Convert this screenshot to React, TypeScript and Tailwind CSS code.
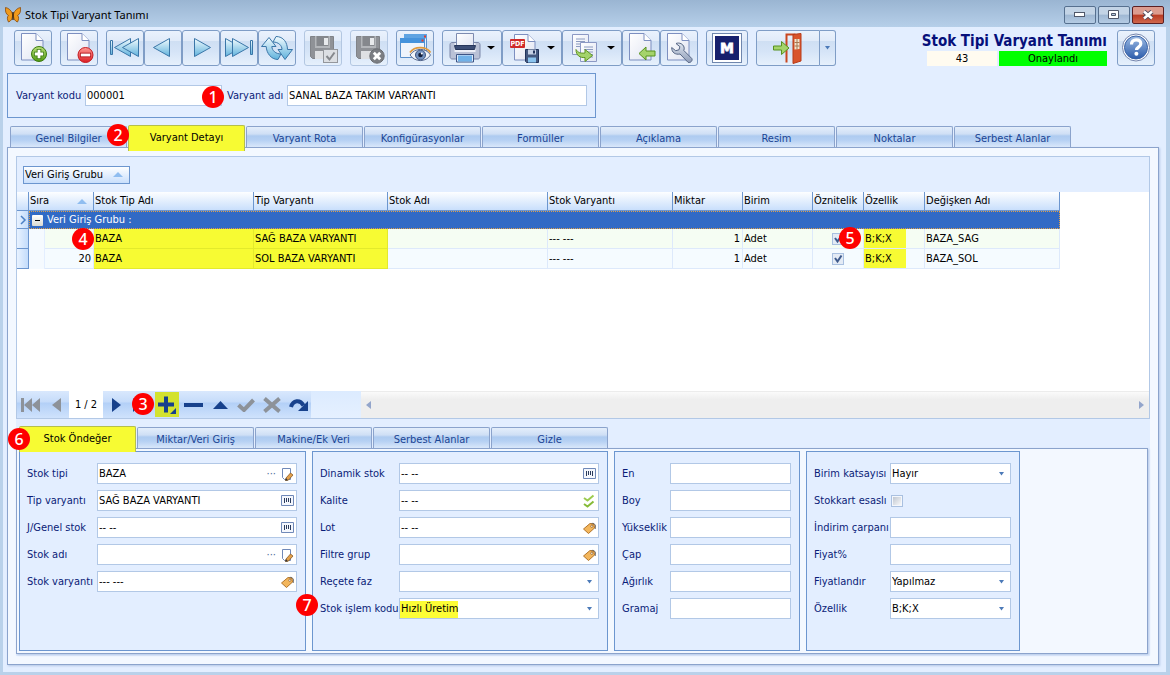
import type { ReactNode, SVGProps } from 'react';

const FONT = "font-['DejaVu_Sans_Condensed','DejaVu_Sans','Noto_Sans',sans-serif]";

/* ---------- shared gradients ---------- */

function Defs() {
  return (
    <svg width="0" height="0" className="absolute" aria-hidden="true">
      <defs>
        <linearGradient id="gBlue" x1="0" y1="0" x2="0" y2="1">
          <stop offset="0" stopColor="#f2fbfe" />
          <stop offset="1" stopColor="#5fb2dc" />
        </linearGradient>
        <linearGradient id="gPage" x1="0" y1="0" x2="1" y2="1">
          <stop offset="0" stopColor="#ffffff" />
          <stop offset="1" stopColor="#e0e4f2" />
        </linearGradient>
        <linearGradient id="gGreen" x1="0" y1="0" x2="0" y2="1">
          <stop offset="0" stopColor="#b9e07a" />
          <stop offset="1" stopColor="#4f9a12" />
        </linearGradient>
        <linearGradient id="gRed" x1="0" y1="0" x2="0" y2="1">
          <stop offset="0" stopColor="#ff9a94" />
          <stop offset="1" stopColor="#dc1d22" />
        </linearGradient>
        <linearGradient id="gHelp" x1="0" y1="0" x2="0" y2="1">
          <stop offset="0" stopColor="#9dbbe4" />
          <stop offset="1" stopColor="#2c5cab" />
        </linearGradient>
        <linearGradient id="gSteel" x1="0" y1="0" x2="0" y2="1">
          <stop offset="0" stopColor="#dfe5ef" />
          <stop offset="1" stopColor="#8e9cb8" />
        </linearGradient>
      </defs>
    </svg>
  );
}

function Icon({ size = 32, children, ...rest }: { size?: number; children: ReactNode } & SVGProps<SVGSVGElement>) {
  return (
    <svg width={size} height={size} viewBox={`0 0 ${size} ${size}`} aria-hidden="true" className="shrink-0" {...rest}>
      {children}
    </svg>
  );
}

/* ---------- toolbar drawings, 32 x 32 ---------- */

const Page = () => (
  <>
    <path d="M4.500 1.500h14.500l7 7v19.500h-21.500z" fill="url(#gPage)" stroke="#7d8fc0" />
    <path d="M19 1.500v7h7" fill="#fff" stroke="#7d8fc0" />
  </>
);

const NewIcon = () => (
  <Icon>
    <Page />
    <circle cx="22" cy="22" r="7.500" fill="url(#gGreen)" stroke="#3c7a10" />
    <path d="M22 17v10M17 22h10" stroke="#3c7a10" strokeWidth="4.600" />
    <path d="M22 17.800v8.400M17.800 22h8.400" stroke="#fff" strokeWidth="2.800" />
  </Icon>
);

const DeleteIcon = () => (
  <Icon>
    <Page />
    <circle cx="22.500" cy="23" r="7.500" fill="url(#gRed)" stroke="#c41a20" />
    <path d="M17 23h11" stroke="#b3151b" strokeWidth="4.600" />
    <path d="M17.800 23h9.400" stroke="#fff" strokeWidth="2.800" />
  </Icon>
);

const navStroke = { fill: 'url(#gBlue)', stroke: '#3a76a8', strokeLinejoin: 'round' as const };

const FirstIcon = () => (
  <Icon>
    <rect x="1.500" y="8.500" width="2" height="14" {...navStroke} />
    <path d="M21.500 6.500v18l-16-9z" {...navStroke} />
    <path d="M29.500 6.500v18l-16-9z" {...navStroke} />
  </Icon>
);
const PrevIcon = () => (
  <Icon>
    <path d="M22.500 6.500v18l-16-9z" {...navStroke} />
  </Icon>
);
const NextIcon = () => (
  <Icon>
    <path d="M9.500 6.500v18l16-9z" {...navStroke} />
  </Icon>
);
const LastIcon = () => (
  <Icon>
    <path d="M2.500 6.500v18l16-9z" {...navStroke} />
    <path d="M9.500 6.500v18l16-9z" {...navStroke} />
    <rect x="27.500" y="8.500" width="2" height="14" {...navStroke} />
  </Icon>
);
const RefreshIcon = () => (
  <Icon>
    <path d="M.500 14.500 8 5.500l7 9h-4.200c.3 4.200 4 7.500 9.200 7.500l-3 5.500C10 27.500 5.500 21 5.200 14.500z" {...navStroke} />
    <path d="M31.500 17.500 24 27.500l-7-10h4c0-4-3.500-7.500-9-7.500l3-5.500c7.500 0 11.300 6 11.500 13z" {...navStroke} />
  </Icon>
);

const GreyFloppy = () => (
  <>
    <path d="M3.500 4.500h23v22h-21l-2-2z" fill="#8f9297" stroke="#808388" />
    <path d="M8 4h15v12H8z" fill="#b3b6ba" />
    <path d="M9.500 4h12v10h-12z" fill="#85888d" />
    <path d="M17 6h4v7h-4z" fill="#e8eaec" />
    <path d="M8 19h15v8H8z" fill="#dfe1e4" />
  </>
);

const SaveOkIcon = () => (
  <Icon>
    <GreyFloppy />
    <rect x="16.500" y="17.500" width="14" height="13" fill="#dcdfe3" stroke="#94979c" />
    <path d="m19.500 24 3 3.500 5-7" fill="none" stroke="#85888d" strokeWidth="2" />
  </Icon>
);
const SaveCancelIcon = () => (
  <Icon>
    <GreyFloppy />
    <circle cx="24" cy="24" r="7.200" fill="#7b7e83" stroke="#6a6d72" />
    <path d="m20.800 20.800 6.400 6.400m0-6.400-6.400 6.400" stroke="#fff" strokeWidth="2.800" />
  </Icon>
);

const PreviewIcon = () => (
  <Icon>
    <path d="M5.500 2.500h22v18h-22z" fill="#e6effb" stroke="#5a8fca" />
    <path d="M5 2h23v4.500H5z" fill="#5ea3e2" />
    <path d="M25 3.500h2v2h-2z" fill="#e03c2e" />
    <path d="M1.500 6.500h24v19h-24z" fill="#eef4fc" stroke="#5a8fca" />
    <path d="M1 6h25v5H1z" fill="#4593dc" />
    <path d="M22.500 7.500h2v2h-2z" fill="#e03c2e" />
    <path d="M11 23c5-7.500 16-7.500 20.500 0-4.500 7.500-15.500 7.500-20.500 0z" fill="#f1f5fa" stroke="#5c6f94" />
    <path d="M11 20.500c4.500-6.500 16-6.500 20.500 0" fill="none" stroke="#e09a3c" strokeWidth="1.800" />
    <circle cx="21.500" cy="23" r="5" fill="#7392bf" stroke="#3f5682" />
    <circle cx="21.500" cy="23" r="2.300" fill="#14203c" />
    <circle cx="22.800" cy="21.500" r="1" fill="#fff" />
  </Icon>
);

const PrintIcon = () => (
  <Icon>
    <path d="M3 10.500h26c1 0 2 1 2 2v12c0 1.500-1 2.500-2 2.500H3c-1 0-2-1-2-2.500v-12c0-1 1-2 2-2z" fill="#b9c1d6" stroke="#7a86a8" />
    <path d="M5.500 11h21v9h-21z" fill="#eceff7" />
    <path d="M7.500 1.500h17v14h-17z" fill="url(#gPage)" stroke="#7d8bb0" />
    <path d="M5.500 13.500h21l-1 4h-19z" fill="#3c4d75" stroke="#27365a" />
    <path d="M7.500 22.500h17v7.500h-17z" fill="#dceafa" stroke="#3d5485" />
    <path d="M9 23.500h14v6H9z" fill="#70b1e8" />
  </Icon>
);

const PdfIcon = () => (
  <Icon>
    <path d="M5.500 2.500h13.500l7 7v18.500h-20.500z" fill="url(#gPage)" stroke="#7d8fc0" />
    <path d="M19 2.500v7h7" fill="#fff" stroke="#7d8fc0" />
    <rect x="1" y="7" width="15" height="9" rx="1" fill="#cf2a2a" />
    <text x="8.500" y="14" textAnchor="middle" fontSize="7" fontWeight="700" fill="#fff" fontFamily="DejaVu Sans Condensed">
      PDF
    </text>
    <path d="M16.500 17.500h13v13h-12l-1-1z" fill="#44587f" stroke="#22345c" />
    <path d="M19 17.500h8v5h-8z" fill="#c7d2e6" />
    <path d="M24 18.500h2v3h-2z" fill="#22345c" />
    <path d="M19 25.500h8v5h-8z" fill="#8bc4ef" />
  </Icon>
);

const ExportIcon = () => (
  <Icon>
    <path d="M3.500 2.500h16v20h-16z" fill="url(#gPage)" stroke="#8c99c4" />
    <path d="M7 7h9M7 9.500h9M7 12h6M7 14.500h5" stroke="#8c9cc0" />
    <path d="M11.500 10.500h16v19h-16z" fill="url(#gPage)" stroke="#8c99c4" />
    <path d="M15 15h9M15 17.500h9M18 20h6M20 22.500h4M20 25h4" stroke="#8c9cc0" />
    <path d="M7 17.500c2 3 4 4 9 3.500V17.500l7.500 6-7.500 6v-4c-5 .5-9-2-9-8z" fill="#a4d36b" stroke="#5f9420" />
  </Icon>
);

const ImportIcon = () => (
  <Icon>
    <Page />
    <path d="M14 21.500 21 15v4h9v5h-9v4z" fill="#a4d36b" stroke="#57921f" />
  </Icon>
);

const WrenchIcon = () => (
  <Icon>
    <Page />
    <path
      d="M13 11.500c3.500-1.300 7 .5 8 3.500.4 1.400.2 2.500-.2 3.500l8 8c1.300 2-1.600 5-3.800 3.800l-8-8.300c-4.500 1-8.500-1.500-8.300-6.500l4 3.200 3.300-.9.900-3.100z"
      fill="url(#gSteel)"
      stroke="#566685"
    />
  </Icon>
);

const MIcon = () => (
  <Icon>
    <rect x="1.500" y="1.500" width="29" height="29" fill="#fff" stroke="#6f86ad" />
    <rect x="4" y="4" width="24" height="24" fill="#17206d" />
    <text x="16" y="21" textAnchor="middle" fontSize="14" fontWeight="700" fill="#fff" stroke="#fff" strokeWidth="0.800" fontFamily="DejaVu Sans">
      M
    </text>
  </Icon>
);

const ExitIcon = () => (
  <Icon>
    <path d="M14.500 30.500v-28h9" fill="none" stroke="#c9461f" strokeWidth="2" />
    <path d="M21 2.500 29 1.500v27.500l-8 2.500z" fill="#d9542b" stroke="#b83a18" />
    <path d="M22.500 7h5v10l-5 .5z" fill="#f1e4cf" />
    <path d="M25 7v10.500M22.500 10.500h5M22.500 14h5" stroke="#a8764f" />
    <path d="M1.500 14h8v-4.500l7.500 6.500-7.500 6.500V18h-8z" fill="#a4d36b" stroke="#57921f" />
  </Icon>
);

const HelpIcon = () => (
  <Icon>
    <circle cx="16" cy="15.500" r="13.500" fill="#fff" stroke="#7384ad" />
    <circle cx="16" cy="15.500" r="11.500" fill="url(#gHelp)" stroke="#3a63a8" />
    <path d="M11.500 12.500c0-3 2-4.700 4.700-4.700 2.800 0 4.600 1.600 4.600 4 0 3.300-4.300 3.300-4.300 6.200" fill="none" stroke="#fff" strokeWidth="3.200" />
    <circle cx="16.400" cy="21.800" r="2" fill="#fff" />
  </Icon>
);

const Butterfly = () => (
  <Icon size={16}>
    <path d="M7.500 7C6.500 3.500 3.500 1 .5.500 0 4 1 7.500 3.500 8.500 2 9.500 2 12.500 3.500 15c2-.5 4-3 4-6z" fill="#f09a1c" stroke="#8a4a0b" strokeWidth="0.800" />
    <path d="M8.500 7C9.500 3.500 12.500 1 15.500.500 16 4 15 7.500 12.500 8.500c1.500 1 1.500 4 0 6.500-2-.5-4-3-4-6z" fill="#f09a1c" stroke="#8a4a0b" strokeWidth="0.800" />
    <path d="M8 5v8" stroke="#3c2408" strokeWidth="1.400" />
  </Icon>
);

/* ---------- small field drawings, 14 x 14 ---------- */

const EditGlyph = () => (
  <Icon size={14}>
    <path d="M2.500 1.500h8v11h-6l-2-2z" fill="#fff" stroke="#7089b8" />
    <path d="m6 11 4.500-5 2.500 2-4.500 5-3 .5z" fill="#e3a04a" stroke="#8a5a24" strokeWidth="0.800" />
    <path d="m6 11 2 2.500H5.200z" fill="#333" />
  </Icon>
);
const BarcodeGlyph = () => (
  <Icon size={14}>
    <path d="M1.500 1.500h12v10h-12z" fill="#f4f7fd" stroke="#7089b8" />
    <path d="M4.500 4v5M6.500 4v4M8.500 4v4M10.500 4v5" stroke="#2c3c5c" />
  </Icon>
);
const TagGlyph = () => (
  <Icon size={14}>
    <path d="M8.500 3c3.500-2 6 1 4.500 5" fill="none" stroke="#555" />
    <path d="m1.500 8 6.500-5.500 4 1 .5 3.500-6 5.500z" fill="#f3b65c" stroke="#b3752a" />
    <circle cx="9.800" cy="5.300" r="1.100" fill="#fff" stroke="#8a5a24" strokeWidth="0.700" />
  </Icon>
);
const ChecksGlyph = () => (
  <Icon size={14}>
    <path d="M2 4 5.500 6.500 11.500 1.500" fill="none" stroke="#9ccb4f" strokeWidth="2" />
    <path d="M2 10 5.500 12.500 11.500 7.500" fill="none" stroke="#86bb38" strokeWidth="2" />
  </Icon>
);

const Caret = ({ color = '#4c7ab8', w = 5 }: { color?: string; w?: number }) => (
  <svg width={w} height="4" viewBox="0 0 6 4" preserveAspectRatio="none" aria-hidden="true" className="shrink-0">
    <path d="M0 0h6L3 3.500z" fill={color} />
  </svg>
);

const SortMark = () => (
  <svg width="10" height="5" viewBox="0 0 10 5" aria-hidden="true" className="shrink-0">
    <path d="M0 5 5 0l5 5z" fill="#8fbdf0" />
  </svg>
);

/* ---------- building blocks ---------- */

function Badge({ n, className }: { n: number; className: string }) {
  return (
    <span
      className={`absolute z-10 flex size-[22px] items-center justify-center rounded-full bg-[#fe0000] font-['Noto_Sans',sans-serif] text-base leading-none font-medium text-white ${className}`}
    >
      {n}
    </span>
  );
}

const BTN =
  'flex h-9 items-center justify-center rounded-[3px] border bg-[linear-gradient(#eaf2fd_0%,#e1ebf9_28%,#cfdff3_30%,#d5e4f7_60%,#e6f0fc_100%)]';

function ToolButton({ label, icon, className = 'w-[38px]', disabled = false }: { label: string; icon: ReactNode; className?: string; disabled?: boolean }) {
  return (
    <button type="button" aria-label={label} disabled={disabled} className={`${BTN} ${className} ${disabled ? 'border-[#b3c7e2]' : 'border-[#7f9dc6]'}`}>
      {icon}
    </button>
  );
}

function MenuButton({ label, icon }: { label: string; icon: ReactNode }) {
  return (
    <button type="button" aria-label={label} className={`${BTN} w-[60px] gap-1.5 border-[#7f9dc6]`}>
      {icon}
      <Caret color="#000" w={8} />
    </button>
  );
}

function Tabs({ items, active, badge, badgeAt }: { items: string[]; active: number; badge: number; badgeAt: number }) {
  return (
    <div role="tablist" className="flex items-end gap-px pl-[3px]">
      {items.map((t, i) => (
        <div key={t} className="relative">
          <button
            type="button"
            role="tab"
            aria-selected={i === active}
            className={
              i === active
                ? 'relative -mb-1 block h-[26px] w-[117px] rounded-t-[2px] border-x border-t border-[#b5bf4a] bg-[#f7fb33] pb-0.5 text-center text-black'
                : 'block h-[21px] w-[117px] rounded-t-[2px] border-x border-t border-[#8ba3cc] bg-[linear-gradient(#e4eefb_0%,#cfdff5_35%,#aecbf0_45%,#b5d0f3_65%,#d9e7fa_100%)] pt-[3px] text-center text-[#1b4594]'
            }
          >
            {t}
          </button>
          {i === badgeAt && <Badge n={badge} className={badgeAt === active ? '-left-[11px] top-0.5' : '-right-0.5 -top-0.5'} />}
        </div>
      ))}
    </div>
  );
}

type Kind = 'text' | 'select' | 'check';
interface FieldSpec {
  label: string;
  value?: string;
  kind?: Kind;
  glyphs?: ReactNode;
  mark?: boolean;
  badge?: number;
}

const BOX = 'border border-[#b2c8e6] bg-white text-black';

function Field({ id, spec, labelW, inputW }: { id: string; spec: FieldSpec; labelW: string; inputW: string }) {
  const { label, value = '', kind = 'text', glyphs, mark, badge } = spec;
  return (
    <div className="relative flex h-[21px] items-center">
      {badge && <Badge n={badge} className="-left-6 -top-1" />}
      <label htmlFor={id} className={`shrink-0 whitespace-nowrap text-[#0a1c78] ${labelW}`}>
        {label}
      </label>
      {kind === 'check' && (
        <input
          id={id}
          type="checkbox"
          className="ml-px size-3 appearance-none border border-[#a9c0e0] bg-[linear-gradient(135deg,#b9c0cb,#ffffff)] shadow-[inset_0_0_0_1px_#f4f7fc]"
        />
      )}
      {kind === 'text' && (
        <div className={`flex h-full items-center pr-0.5 ${BOX} ${inputW}`}>
          <input id={id} type="text" defaultValue={value} className="h-full min-w-0 flex-1 bg-transparent pl-px outline-none" />
          <span className="flex items-center gap-1">{glyphs}</span>
        </div>
      )}
      {kind === 'select' && (
        <div className={`relative flex h-full items-center ${BOX} ${inputW}`}>
          {mark && <span className="absolute bottom-0 left-0 top-0.5 w-[58px] bg-[#fdfd35]" />}
          <select id={id} defaultValue={value} className="relative h-full w-full appearance-none bg-transparent pl-px outline-none">
            <option>{value}</option>
          </select>
          <span className="pointer-events-none absolute right-1.5">
            <Caret />
          </span>
        </div>
      )}
    </div>
  );
}

function FieldGroup({ name, fields, className, labelW, inputW }: { name: string; fields: FieldSpec[]; className: string; labelW: string; inputW: string }) {
  return (
    <section className={`flex flex-col gap-1.5 border border-[#6c96cf] bg-[#e3eeff] px-[7px] pt-[11px] ${className}`}>
      {fields.map((f, i) => (
        <Field key={f.label} id={`${name}-${i}`} spec={f} labelW={labelW} inputW={inputW} />
      ))}
    </section>
  );
}

/* ---------- data ---------- */

const dots = <span className="text-[#4c6a9c]">···</span>;
const edit = (
  <>
    {dots}
    <EditGlyph />
  </>
);

const stockFields: FieldSpec[] = [
  { label: 'Stok tipi', value: 'BAZA', glyphs: edit },
  { label: 'Tip varyantı', value: 'SAĞ BAZA VARYANTI', glyphs: <BarcodeGlyph /> },
  { label: 'J/Genel stok', value: '-- --', glyphs: <BarcodeGlyph /> },
  { label: 'Stok adı', glyphs: edit },
  { label: 'Stok varyantı', value: '--- ---', glyphs: <TagGlyph /> },
];
const dynamicFields: FieldSpec[] = [
  { label: 'Dinamik stok', value: '-- --', glyphs: <BarcodeGlyph /> },
  { label: 'Kalite', value: '-- --', glyphs: <ChecksGlyph /> },
  { label: 'Lot', value: '-- --', glyphs: <TagGlyph /> },
  { label: 'Filtre grup', glyphs: <TagGlyph /> },
  { label: 'Reçete faz', kind: 'select' },
  { label: 'Stok işlem kodu', value: 'Hızlı Üretim', kind: 'select', mark: true, badge: 7 },
];
const sizeFields: FieldSpec[] = [{ label: 'En' }, { label: 'Boy' }, { label: 'Yükseklik' }, { label: 'Çap' }, { label: 'Ağırlık' }, { label: 'Gramaj' }];
const priceFields: FieldSpec[] = [
  { label: 'Birim katsayısı', value: 'Hayır', kind: 'select' },
  { label: 'Stokkart esaslı', kind: 'check' },
  { label: 'İndirim çarpanı' },
  { label: 'Fiyat%' },
  { label: 'Fiyatlandır', value: 'Yapılmaz', kind: 'select' },
  { label: 'Özellik', value: 'B;K;X', kind: 'select' },
];

const rows = [
  { no: '', type: 'BAZA', variant: 'SAĞ BAZA VARYANTI', stockVariant: '--- ---', qty: '1', unit: 'Adet', prop: 'B;K;X', variable: 'BAZA_SAG' },
  { no: '20', type: 'BAZA', variant: 'SOL BAZA VARYANTI', stockVariant: '--- ---', qty: '1', unit: 'Adet', prop: 'B;K;X', variable: 'BAZA_SOL' },
];

/* ---------- sections ---------- */

function TitleBar() {
  const sys = 'flex h-[18px] w-8 items-center justify-center rounded-[2px] border';
  return (
    <header className="flex h-[27px] items-center bg-[linear-gradient(#9ab5d2,#b6cfe9)] pl-[5px] pr-1.5 pt-[3px]">
      <Butterfly />
      <h1 className="ml-1 font-['Noto_Sans',sans-serif] text-[11px] text-black">Stok Tipi Varyant Tanımı</h1>
      <div className="ml-auto flex gap-0.5">
        <button type="button" aria-label="Simge durumuna küçült" className={`${sys} border-[#56708f] bg-[linear-gradient(#c3d4e6_45%,#9fb8d3_50%,#b5cce4)]`}>
          <svg width="12" height="6" aria-hidden="true"><rect x="0.500" y="0.500" width="10" height="4" fill="#fff" stroke="#50586a" /></svg>
        </button>
        <button type="button" aria-label="Ekranı kapla" className={`${sys} border-[#56708f] bg-[linear-gradient(#c3d4e6_45%,#9fb8d3_50%,#b5cce4)]`}>
          <svg width="12" height="10" aria-hidden="true"><path d="M.5.5h10v8H.5zM3.500 3.500h4v2h-4z" fill="#fff" fillRule="evenodd" stroke="#50586a" /></svg>
        </button>
        <button type="button" aria-label="Kapat" className={`${sys} border-[#5b1f22] bg-[linear-gradient(#dc9c8f_45%,#b93a22_50%,#d0674c)]`}>
          <svg width="12" height="10" viewBox="0 0 12 10" aria-hidden="true">
            <path d="m2 1.500 8 7m0-7-8 7" stroke="#50485a" strokeWidth="4.400" />
            <path d="m2 1.500 8 7m0-7-8 7" stroke="#fff" strokeWidth="2.600" />
          </svg>
        </button>
      </div>
    </header>
  );
}

function Toolbar() {
  return (
    <div className="flex items-start gap-2 pb-[7px] pl-[11px] pr-[11px] pt-[3px]">
      <ToolButton label="Yeni" icon={<NewIcon />} />
      <ToolButton label="Sil" icon={<DeleteIcon />} />
      <div className="flex">
        <ToolButton label="İlk" icon={<FirstIcon />} />
        <ToolButton label="Önceki" icon={<PrevIcon />} />
        <ToolButton label="Sonraki" icon={<NextIcon />} />
        <ToolButton label="Son" icon={<LastIcon />} />
        <ToolButton label="Yenile" icon={<RefreshIcon />} />
      </div>
      <ToolButton label="Kaydet" icon={<SaveOkIcon />} disabled />
      <ToolButton label="Vazgeç" icon={<SaveCancelIcon />} disabled />
      <ToolButton label="Önizle" icon={<PreviewIcon />} />
      <div className="flex">
        <MenuButton label="Yazdır" icon={<PrintIcon />} />
        <MenuButton label="PDF" icon={<PdfIcon />} />
        <MenuButton label="Kopyala" icon={<ExportIcon />} />
        <ToolButton label="İçeri al" icon={<ImportIcon />} />
        <ToolButton label="Araçlar" icon={<WrenchIcon />} />
      </div>
      <ToolButton label="M" icon={<MIcon />} className="w-[42px]" />
      <div className="flex">
        <ToolButton label="Çıkış" icon={<ExitIcon />} className="w-16 rounded-r-none" />
        <ToolButton label="Çıkış seçenekleri" icon={<Caret />} className="w-4 rounded-l-none border-l-0" />
      </div>
      <div className="ml-auto flex gap-2.5">
        <div className="w-[188px]">
          <h2 className="flex h-[21px] justify-end whitespace-nowrap text-[15px] leading-[22px] font-bold text-[#06107a]">Stok Tipi Varyant Tanımı</h2>
          <div className="flex justify-end gap-0.5 text-center leading-[15px] text-black">
            <span className="h-[15px] w-[70px] bg-[#fffbf0]">43</span>
            <span className="h-[15px] w-[108px] bg-[#00ff00]">Onaylandı</span>
          </div>
        </div>
        <ToolButton label="Yardım" icon={<HelpIcon />} />
      </div>
    </div>
  );
}

function HeaderBox() {
  return (
    <section className="ml-1 flex h-[45px] w-[589px] items-center border border-[#6c96cf] px-2 text-[#0a1c78]">
      <label htmlFor="kod" className="w-[69px]">Varyant kodu</label>
      <div className="relative">
        <input id="kod" type="text" defaultValue="000001" className={`h-[21px] w-[137px] pl-px ${BOX}`} />
        <Badge n={1} className="-right-0.5 top-px" />
      </div>
      <label htmlFor="ad" className="ml-[5px] w-[60px] whitespace-nowrap">Varyant adı</label>
      <input id="ad" type="text" defaultValue="SANAL BAZA TAKIM VARYANTI" className={`h-[21px] w-[300px] pl-px ${BOX}`} />
    </section>
  );
}

const TH = 'border-r border-[#6c96cf] border-b border-b-[#6c96cf] bg-[linear-gradient(#fdfeff,#c9dffc)] pl-px text-left font-normal overflow-hidden whitespace-nowrap';
const TD = 'border-b border-r border-[#dde9fb] pl-px pr-0.5 whitespace-nowrap';
const MARK = 'bg-[#f7fb33] border-[#e3ea2c]';

function Grid() {
  return (
    <table className="w-[1043px] table-fixed border-separate border-spacing-0 text-black">
      <colgroup>
        <col className="w-3" />
        <col className="w-4" />
        <col className="w-[49px]" />
        <col className="w-40" />
        <col className="w-[134px]" />
        <col className="w-40" />
        <col className="w-[125px]" />
        <col className="w-[70px]" />
        <col className="w-[70px]" />
        <col className="w-[51px]" />
        <col className="w-[61px]" />
        <col className="w-[135px]" />
      </colgroup>
      <thead>
        <tr className="h-[19px]">
          <th className={TH} aria-label="Satır" />
          <th className={TH} colSpan={2}>
            <span className="flex items-center justify-between pr-1.5">
              Sıra <SortMark />
            </span>
          </th>
          {['Stok Tip Adı', 'Tip Varyantı', 'Stok Adı', 'Stok Varyantı', 'Miktar', 'Birim', 'Öznitelik', 'Özellik', 'Değişken Adı'].map((h) => (
            <th key={h} className={TH}>{h}</th>
          ))}
        </tr>
      </thead>
      <tbody>
        <tr className="h-[18px]">
          <td className="border-b border-r border-[#6c96cf] bg-[linear-gradient(90deg,#e8f2ff,#c3dcfb)] p-0">
            <svg width="11" height="10" aria-hidden="true"><path d="m4 1 4 4-4 4" fill="none" stroke="#4a80c6" strokeWidth="1.500" /></svg>
          </td>
          <td colSpan={11} className="border border-dotted border-[#e0a04a] bg-[#316ac5] px-0.5 text-white">
            <span className="flex items-center gap-1">
              <button type="button" aria-label="Grubu daralt" className="flex size-[11px] items-center justify-center rounded-[1px] bg-[linear-gradient(#ffffff,#d9d9d2)]">
                <span className="h-px w-[5px] bg-black" />
              </button>
              Veri Giriş Grubu :
            </span>
          </td>
        </tr>
        {rows.map((r, i) => (
          <tr key={r.variable} className={i === 0 ? 'h-5 bg-[#f5fdf3]' : 'h-5 bg-[#f5fbff]'}>
            <td className="border-b border-r border-[#6c96cf] bg-[linear-gradient(90deg,#e8f2ff,#c3dcfb)] p-0" />
            <td className="border-r border-[#e3eeff] bg-[#f5faff]" />
            <td className={`relative text-right ${TD}`}>
              {r.no}
              {i === 0 && <Badge n={4} className="-right-px -top-px" />}
            </td>
            <td className={`${TD} ${MARK}`}>{r.type}</td>
            <td className={`${TD} ${MARK}`}>{r.variant}</td>
            <td className={TD} />
            <td className={TD}>{r.stockVariant}</td>
            <td className={`text-right ${TD}`}>{r.qty}</td>
            <td className={TD}>{r.unit}</td>
            <td className={`relative ${TD}`}>
              <label className="relative mx-auto flex size-3 items-center justify-center">
                <input type="checkbox" defaultChecked aria-label="Öznitelik" className="absolute inset-0 appearance-none border border-[#a9c0e0] bg-[#e4ebf5]" />
                <svg width="10" height="10" viewBox="0 0 10 10" aria-hidden="true" className="pointer-events-none relative">
                  <path d="m2 4 2.500 3.500L8.500 1.500" fill="none" stroke="#3e5a8c" strokeWidth="2" />
                </svg>
              </label>
              {i === 0 && <Badge n={5} className="right-0.5 -top-0.5" />}
            </td>
            <td className={`${TD} bg-[linear-gradient(90deg,#f7fb33_42px,transparent_42px)]`}>{r.prop}</td>
            <td className={TD}>{r.variable}</td>
          </tr>
        ))}
      </tbody>
    </table>
  );
}

const NAV_DARK = '#17418c';
const NAV_GREY = '#8d9299';

function NavBtn({ label, children, className = 'w-[26px]' }: { label: string; children: ReactNode; className?: string }) {
  return (
    <button type="button" aria-label={label} className={`flex h-full items-center justify-center ${className}`}>
      {children}
    </button>
  );
}

function Navigator() {
  return (
    <div className="flex h-[27px] bg-[#e3eeff]">
      <div className="relative flex bg-[linear-gradient(#d9e8fd_0%,#c6dcfa_40%,#b3d0f7_45%,#cfe2fc_100%)]">
        <NavBtn label="İlk kayıt">
          <svg width="19" height="14" aria-hidden="true"><path d="M0 0h3v14H0zM11 0v14L3 7zM19 0v14l-8-7z" fill={NAV_GREY} /></svg>
        </NavBtn>
        <NavBtn label="Önceki kayıt">
          <svg width="9" height="14" aria-hidden="true"><path d="M9 0v14L0 7z" fill={NAV_GREY} /></svg>
        </NavBtn>
        <span className="flex w-[34px] items-center justify-center bg-white text-black">1 / 2</span>
        <NavBtn label="Sonraki kayıt">
          <svg width="9" height="14" aria-hidden="true"><path d="M0 0v14l9-7z" fill={NAV_DARK} /></svg>
        </NavBtn>
        <NavBtn label="Son kayıt">
          <svg width="18" height="14" aria-hidden="true"><path d="M0 0v14l7-7zM8 0v14l7-7zM15 0h3v14h-3z" fill={NAV_DARK} /></svg>
        </NavBtn>
        <Badge n={3} className="left-[115px] top-0.5" />
        <NavBtn label="Ekle" className="w-6">
          <span className="flex h-[25px] w-6 items-center justify-center bg-[#d3e22f]">
            <svg width="20" height="20" aria-hidden="true">
              <path d="M1 9.500h16M9 1.500v16" stroke={NAV_DARK} strokeWidth="4" />
              <path d="M19 13v6h-6z" fill={NAV_DARK} />
            </svg>
          </span>
        </NavBtn>
        <NavBtn label="Çıkar" className="w-7">
          <svg width="19" height="4" aria-hidden="true"><path d="M0 0h19v4H0z" fill={NAV_DARK} /></svg>
        </NavBtn>
        <NavBtn label="Düzenle">
          <svg width="15" height="8" aria-hidden="true"><path d="M0 8 7.500 0 15 8z" fill={NAV_DARK} /></svg>
        </NavBtn>
        <NavBtn label="Onayla">
          <svg width="18" height="14" aria-hidden="true"><path d="M1.500 7 7 12 16.500 2" fill="none" stroke={NAV_GREY} strokeWidth="4" /></svg>
        </NavBtn>
        <NavBtn label="İptal">
          <svg width="18" height="16" aria-hidden="true"><path d="m1.500 1.500 15 13m0-13-15 13" stroke={NAV_GREY} strokeWidth="4" /></svg>
        </NavBtn>
        <NavBtn label="Yenile">
          <svg width="19" height="14" aria-hidden="true">
            <path d="M2 9C4 2 11 1 14.500 7.500" fill="none" stroke={NAV_DARK} strokeWidth="4" />
            <path d="M19 3v10H9z" fill={NAV_DARK} />
          </svg>
        </NavBtn>
      </div>
      <div className="w-[50px] bg-[linear-gradient(#dcebff,#e5f0ff)]" />
      <div className="flex flex-1 items-center justify-between border-t border-[#ececec] bg-[linear-gradient(#fafafa,#eeeeee_30%)] px-[5px]">
        <button type="button" aria-label="Sola kaydır"><svg width="5" height="8" aria-hidden="true"><path d="M5 0v8L0 4z" fill="#93a5cb" /></svg></button>
        <button type="button" aria-label="Sağa kaydır"><svg width="5" height="8" aria-hidden="true"><path d="M0 0v8l5-4z" fill="#93a5cb" /></svg></button>
      </div>
    </div>
  );
}

export default function App() {
  return (
    <div className={`flex min-h-screen flex-col overflow-hidden bg-[#b9d1ea] text-[11px] leading-[14px] ${FONT}`}>
      <Defs />
      <TitleBar />
      <main className="mb-[3px] ml-[3px] mr-1 flex flex-1 flex-col bg-[#e3eeff]">
        <Toolbar />
        <HeaderBox />
        <div className="ml-1 mr-[7px] mt-[7px] flex flex-1 flex-col pb-[7px]">
          <Tabs
            items={['Genel Bilgiler', 'Varyant Detayı', 'Varyant Rota', 'Konfigürasyonlar', 'Formüller', 'Açıklama', 'Resim', 'Noktalar', 'Serbest Alanlar']}
            active={1}
            badge={2}
            badgeAt={0}
          />
          <div className="flex flex-1 flex-col border border-[#8ba3cc] bg-[#f3f8ff] px-2 pb-2 pt-2 shadow-[1px_1px_2px_#b4c8e6]">
            <div className="flex flex-1 flex-col border border-[#b2c8e6] bg-white">
              <div className="flex h-[35px] items-center bg-[#e3eeff] pl-1.5">
                <button type="button" className="flex h-[18px] w-[107px] items-center justify-between border border-[#6c96cf] bg-[linear-gradient(#fdfeff,#c9dffc)] pl-px pr-1.5 text-black">
                  Veri Giriş Grubu <SortMark />
                </button>
              </div>
              <Grid />
              <div className="min-h-[120px] flex-1" />
              <Navigator />
            </div>
            <div className="bg-[#e3eeff] pb-0.5 pr-0.5 pt-[7px]">
              <Tabs items={['Stok Öndeğer', 'Miktar/Veri Giriş', 'Makine/Ek Veri', 'Serbest Alanlar', 'Gizle']} active={0} badge={6} badgeAt={0} />
              <div className="flex h-[206px] gap-1.5 border border-[#8ba3cc] bg-[#f3f8ff] p-0.5 shadow-[1px_1px_2px_#b4c8e6]">
                <FieldGroup name="stok" fields={stockFields} className="w-[287px]" labelW="w-[70px]" inputW="w-[200px]" />
                <FieldGroup name="dinamik" fields={dynamicFields} className="w-[296px]" labelW="w-[79px]" inputW="w-[200px]" />
                <FieldGroup name="olcu" fields={sizeFields} className="w-[186px]" labelW="w-12" inputW="w-[121px]" />
                <FieldGroup name="fiyat" fields={priceFields} className="w-[214px]" labelW="w-[76px]" inputW="w-[121px]" />
              </div>
            </div>
          </div>
        </div>
      </main>
    </div>
  );
}
